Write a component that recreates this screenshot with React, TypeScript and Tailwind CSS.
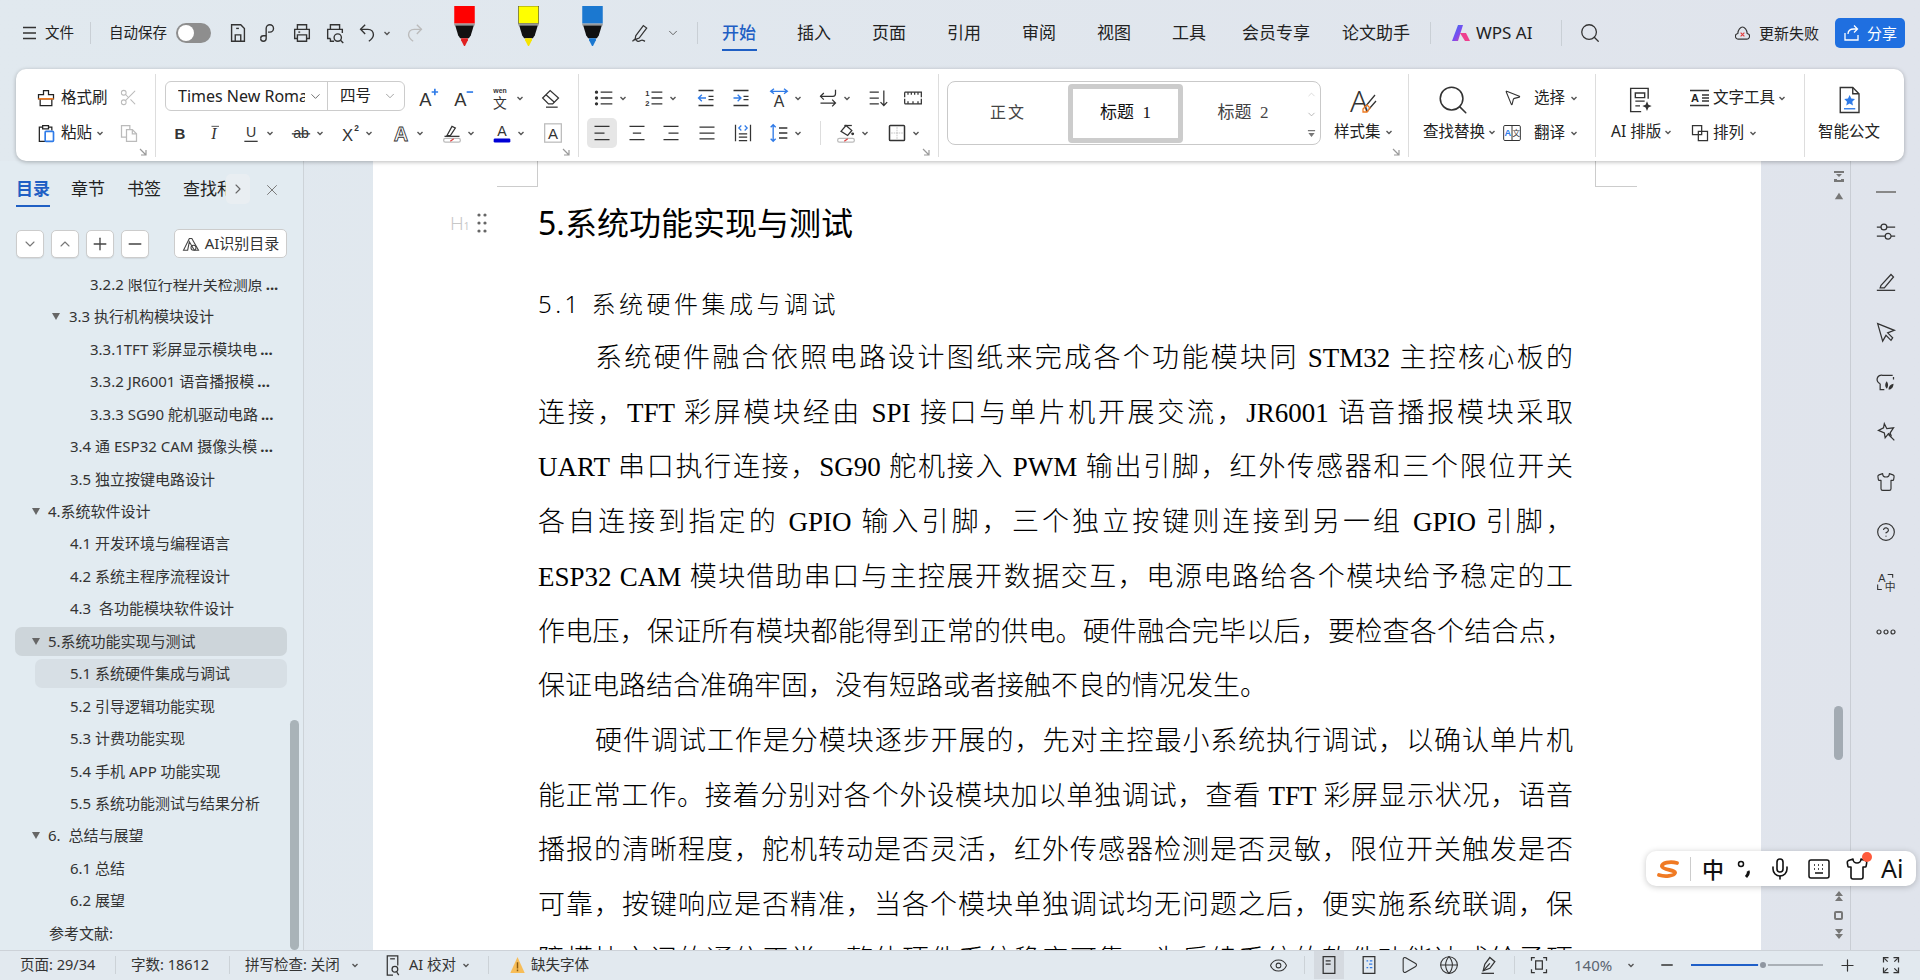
import type { ReactNode } from "react";
import { ChevronDown, ChevronUp, ChevronRight, CircleHelp, Eye, Globe, Mic, Minus, MousePointer2, Play, Plus, Scissors, Search, Shirt, X } from "lucide-react";

type IcProps = { c?: string; sw?: number; children?: ReactNode };

const Ic = ({ c = "h-[20px] w-[20px]", sw = 1.5, children }: IcProps) => (
  <svg viewBox="0 0 24 24" fill="none" stroke="currentColor" strokeWidth={sw} className={`shrink-0 overflow-visible ${c}`}>
    {children}
  </svg>
);

const T = ({ x = 12, y = 20, s = 20, w = 400, f = "Liberation Sans", it = false, fill = "currentColor", stroke = "none", children }: { x?: number; y?: number; s?: number; w?: number; f?: string; it?: boolean; fill?: string; stroke?: string; children: ReactNode }) => (
  <text x={x} y={y} textAnchor="middle" fontSize={s} fontWeight={w} fontFamily={f} fontStyle={it ? "italic" : "normal"} fill={fill} stroke={stroke} strokeWidth={stroke === "none" ? 0 : 1}>
    {children}
  </text>
);

const BLUE = "#2f7be8";

const Caret = () => (
  <svg viewBox="0 0 8 8" fill="none" stroke="#555" strokeWidth="1.4" className="h-[8px] w-[8px] shrink-0">
    <path d="M1.5 3l2.5 2.5L6.5 3" />
  </svg>
);

const Corner = () => (
  <svg viewBox="0 0 10 10" fill="none" stroke="#999" strokeWidth="1.2" className="absolute bottom-[0px] right-[7px] h-[10px] w-[10px]">
    <path d="M2 2l6 6M8 3v5H3" />
  </svg>
);

// one tool in a ribbon row, w is the slot width
const Tool = ({ w, caret, children }: { w: string; caret?: boolean; children: ReactNode }) => (
  <div className={`flex h-full items-center justify-center gap-[5px] text-[#333] ${w}`}>
    {children}
    {caret && <Caret />}
  </div>
);

const Lines = ({ rows, c }: { rows: string[]; c?: string }) => (
  <Ic c={c}>
    {rows.map((d) => (
      <path key={d} d={d} />
    ))}
  </Ic>
);

const Marker = ({ body, tip, outline }: { body: string; tip: string; outline?: boolean }) => (
  <svg viewBox="0 0 21 42" className="h-[41px] w-[21px] shrink-0 self-start">
    <rect x="0" y="0" width="21" height="18" fill={body} stroke={outline ? "#333" : "none"} strokeWidth="0.6" />
    <rect x="0" y="18" width="21" height="2" fill="#999" />
    <path d="M1 20h19l-3 10-2 3H6l-2-3z" fill="#111" />
    <path d="M7 33h7v2l-3 6h-1l-3-6z" fill={tip} />
  </svg>
);

const Pen = ({ c = "h-[20px] w-[20px]" }: { c?: string }) => (
  <Ic c={c}>
    <path d="M7 15L16 3l4 3-9 12-5 2z" />
    <path d="M3 22c2-3 4-3 5-1s3 1 5 0 3 0 5 1" />
  </Ic>
);

const TitleBar = () => (
  <div className="flex h-[69px] shrink-0 items-center pb-[3px] text-[14.5px] text-[#222]">
    <svg viewBox="0 0 15 14" fill="none" stroke="#333" strokeWidth="1.4" className="ml-[22px] h-[14px] w-[15px] shrink-0">
      <path d="M1 1.5h13M1 7h13M1 12.5h13" />
    </svg>
    <span className="ml-[8px] w-[30px]">文件</span>
    <div className="ml-[15px] h-[22px] w-px bg-[#c9cfd5]" />
    <span className="ml-[18px] w-[59px] whitespace-nowrap">自动保存</span>
    <div className="ml-[8px] flex h-[20px] w-[35px] shrink-0 items-center rounded-full bg-[#8e8e8e] pl-[2px]">
      <div className="h-[16px] w-[16px] rounded-full bg-white" />
    </div>
    <div className="ml-[16px] text-[#333]">
      <Lines c="h-[22px] w-[22px]" rows={["M5 3h10l4 4v14H5z", "M9 21v-7h6v7", "M10 7h3"]} />
    </div>
    <div className="ml-[8px] text-[#333]">
      <Lines c="h-[22px] w-[22px]" rows={["M4 18a3 3 0 1 0 6 0V7a4 4 0 1 1 4 4h-2", "M4 18a3 3 0 0 1 3-3h3"]} />
    </div>
    <div className="ml-[12px] text-[#333]">
      <Lines c="h-[22px] w-[22px]" rows={["M7 8V3h10v5", "M7 18H4V8h16v10h-3", "M7 14h10v7H7z", "M8 11h2"]} />
    </div>
    <div className="ml-[11px] text-[#333]">
      <Lines c="h-[22px] w-[22px]" rows={["M7 8V3h10v5", "M7 18H4V8h16v4", "M7 18v3h4", "M15 13a4 4 0 1 0 0 8 4 4 0 0 0 0-8z", "M18 20l3 3"]} />
    </div>
    <div className="ml-[10px] text-[#333]">
      <Lines c="h-[22px] w-[22px]" rows={["M10 3L5 8l5 5", "M5 8h8c4 0 6 3 6 6s-2 5-5 7"]} />
    </div>
    <div className="ml-[5px]">
      <Caret />
    </div>
    <div className="ml-[13px] text-[#bbb]">
      <Lines c="h-[22px] w-[22px]" rows={["M14 3l5 5-5 5", "M19 8h-8c-4 0-6 3-6 6s2 5 5 7"]} />
    </div>
    <div className="ml-[28px] flex h-full items-start pt-[6px]">
      <Marker body="#ff0000" tip="#e02020" />
    </div>
    <div className="ml-[43px] flex h-full items-start pt-[6px]">
      <Marker body="#ffff00" tip="#f5e400" outline />
    </div>
    <div className="ml-[43px] flex h-full items-start pt-[6px]">
      <Marker body="#1b78d0" tip="#1b78d0" />
    </div>
    <div className="ml-[27px] text-[#333]">
      <Pen />
    </div>
    <ChevronDown strokeWidth={1.5} className="ml-[16px] h-[14px] w-[14px] shrink-0 text-[#555]" />
    <div className="ml-[17px] h-[22px] w-px bg-[#c9cfd5]" />
    <div className="ml-[24px] flex gap-[41px] text-[17px]">
      <span className="relative w-[34px] whitespace-nowrap font-medium text-[#1f5fc4]">
        开始
        <span className="absolute bottom-[-5px] left-0 h-[2px] w-[35px] bg-[#1f5fc4]" />
      </span>
      <span className="w-[34px] whitespace-nowrap">插入</span>
      <span className="w-[34px] whitespace-nowrap">页面</span>
      <span className="w-[34px] whitespace-nowrap">引用</span>
      <span className="w-[34px] whitespace-nowrap">审阅</span>
      <span className="w-[34px] whitespace-nowrap">视图</span>
      <span className="w-[34px] whitespace-nowrap">工具</span>
    </div>
    <span className="ml-[36px] w-[68px] whitespace-nowrap text-[17px]">会员专享</span>
    <span className="ml-[32px] w-[68px] whitespace-nowrap text-[17px]">论文助手</span>
    <div className="ml-[20px] h-[22px] w-px bg-[#c9cfd5]" />
    <svg viewBox="0 0 20 20" className="ml-[20px] h-[20px] w-[20px] shrink-0">
      <defs>
        <linearGradient id="wa" x1="0" y1="0" x2="1" y2="1">
          <stop offset="0" stopColor="#2f7bf0" />
          <stop offset="0.55" stopColor="#7a4cf0" />
          <stop offset="1" stopColor="#f0409a" />
        </linearGradient>
      </defs>
      <path d="M1 18L7 2h5L7 18z" fill="url(#wa)" />
      <path d="M9 10l6 0 4 8h-5z" fill="#ee3f8e" />
    </svg>
    <span className="ml-[5px] w-[60px] whitespace-nowrap text-[17px]">WPS AI</span>
    <div className="ml-[25px] h-[26px] w-px bg-[#c9cfd5]" />
    <Search strokeWidth={1.4} className="ml-[17px] h-[22px] w-[22px] shrink-0 text-[#333]" />
    <svg viewBox="0 0 16 18" fill="none" stroke="#333" strokeWidth="1.2" className="ml-auto h-[17px] w-[15px] shrink-0">
      <path d="M4 15a3 3 0 0 1-1-6c0-4 3-7 5-7s5 3 5 7a3 3 0 0 1-1 6z" />
      <path d="M6 8l4 4M10 8l-4 4" stroke="#e23b3b" />
    </svg>
    <span className="ml-[9px] w-[62px] whitespace-nowrap text-[15px]">更新失败</span>
    <div className="ml-[14px] mr-[15px] flex h-[30px] w-[70px] items-center justify-center gap-[6px] rounded-[5px] bg-[#1f6fe0] text-[15px] text-white">
      <svg viewBox="0 0 18 18" fill="none" stroke="white" strokeWidth="1.3" className="h-[18px] w-[18px] shrink-0">
        <path d="M2 9v7h13v-5" />
        <path d="M5 10c0-3 2-5 6-5h3M11 1.5L14.5 5 11 8.5" />
      </svg>
      分享
    </div>
  </div>
);

const Ribbon = () => (
  <div className="z-10 mx-[16px] flex h-[92px] shrink-0 rounded-[10px] bg-white pt-[5px] text-[15.5px] text-[#222] shadow-[0_1px_4px_rgba(0,0,0,0.28)]">
    <div className="relative h-[83px] w-[140px] shrink-0 border-r border-[#ddd] pt-[6px]">
      <div className="flex h-[35px] items-center pl-[20px]">
        <Ic c="h-[20px] w-[20px]" sw={1.5}>
          <path d="M9 8V3h6v5h6v5H3V8z" />
          <path d="M5 13v8h14v-8" />
          <path d="M3 13h18" stroke="#ef7b22" strokeWidth="2" />
        </Ic>
        <span className="ml-[5px] w-[58px] whitespace-nowrap">格式刷</span>
        <Scissors strokeWidth={1.3} className="h-[19px] w-[19px] shrink-0 text-[#bbb]" />
      </div>
      <div className="flex h-[35px] items-center pl-[20px]">
        <Ic c="h-[20px] w-[20px]">
          <path d="M8 5H4v17h8" />
          <path d="M8 3h7v4H8z" />
          <path d="M15 5h4v4" />
          <rect x="11" y="10" width="10" height="12" rx="1" stroke={BLUE} strokeWidth="2" />
        </Ic>
        <span className="ml-[5px] w-[31px] whitespace-nowrap">粘贴</span>
        <div className="ml-[4px] w-[23px]">
          <Caret />
        </div>
        <div className="text-[#bbb]">
          <Lines rows={["M9 17H3V3h10v5", "M9 8h7l5 5v9H9z", "M16 8v5h5"]} />
        </div>
      </div>
      <Corner />
    </div>

    <div className="relative h-[83px] w-[423px] shrink-0 border-r border-[#ddd] pl-[9px] pt-[6px]">
      <div className="flex h-[35px] items-center">
        <div className="mb-[3px] flex h-[30px] w-[240px] shrink-0 items-center rounded-[6px] border border-[#ccc]">
          <span className="ml-[12px] w-[127px] overflow-hidden whitespace-nowrap text-[16px]">Times New Roman</span>
          <ChevronDown strokeWidth={1.5} className="ml-[3px] h-[15px] w-[15px] shrink-0 text-[#666]" />
          <div className="ml-[4px] h-full w-px bg-[#ccc]" />
          <span className="ml-[12px] w-[38px] whitespace-nowrap">四号</span>
          <ChevronDown strokeWidth={1.3} className="ml-[5px] h-[14px] w-[14px] shrink-0 text-[#888]" />
        </div>
        <div className="ml-[6px] flex h-full">
          <Tool w="w-[34px]">
            <Ic c="h-[22px] w-[22px]">
              <T x={9} y={21} s={20}>A</T>
              <path d="M16 5.5h7M19.5 2v7" stroke={BLUE} strokeWidth="1.8" />
            </Ic>
          </Tool>
          <Tool w="w-[36px]">
            <Ic c="h-[22px] w-[22px]">
              <T x={9} y={21} s={20}>A</T>
              <path d="M16 5.5h7" stroke={BLUE} strokeWidth="1.8" />
            </Ic>
          </Tool>
          <Tool w="w-[51px]" caret>
            <Ic c="h-[22px] w-[22px]">
              <T y={6} s={7.5} w={700}>wen</T>
              <T y={23} s={15} f="Noto Sans CJK SC">文</T>
            </Ic>
          </Tool>
          <Tool w="w-[38px]">
            <Lines rows={["M2 12L11 3l10 9-7 7H9z", "M6 8l10 9", "M6 23h14"]} />
          </Tool>
        </div>
      </div>
      <div className="flex h-[35px] items-center">
        <Tool w="w-[30px]">
          <Ic>
            <T y={19} s={18} w={700}>B</T>
          </Ic>
        </Tool>
        <Tool w="w-[38px]">
          <Ic>
            <T y={19} s={19} it f="Liberation Serif">I</T>
            <path d="M9 4h9" strokeWidth="1" />
          </Ic>
        </Tool>
        <Tool w="w-[49px]" caret>
          <Ic>
            <T y={17} s={17}>U</T>
            <path d="M4 22h16" />
          </Ic>
        </Tool>
        <Tool w="w-[51px]" caret>
          <Ic>
            <T y={18} s={17}>ab</T>
            <path d="M1 13h22" />
          </Ic>
        </Tool>
        <Tool w="w-[47px]" caret>
          <Ic>
            <T x={9} y={21} s={20}>X</T>
            <T x={20} y={10} s={10} w={700}>2</T>
          </Ic>
        </Tool>
        <Tool w="w-[55px]" caret>
          <Ic>
            <T y={21} s={24} fill="white" stroke="#333" w={700}>A</T>
          </Ic>
        </Tool>
        <Tool w="w-[46px]" caret>
          <Ic>
            <path d="M6 15L12 4l4 2-6 9z" />
            <path d="M3 16h18" />
            <rect x="2" y="18.5" width="20" height="4.5" rx="2" stroke="#bbb" />
            <path d="M10 22l4-3" stroke="#e04040" />
          </Ic>
        </Tool>
        <Tool w="w-[54px]" caret>
          <Ic>
            <T y={16} s={17}>A</T>
            <rect x="2" y="18.5" width="20" height="5" rx="1.5" fill="#0000d6" stroke="none" />
          </Ic>
        </Tool>
        <Tool w="w-[36px]">
          <Ic>
            <rect x="2" y="1" width="20" height="22" stroke="#bbb" />
            <T y={19} s={18}>A</T>
          </Ic>
        </Tool>
      </div>
      <Corner />
    </div>

    <div className="relative h-[83px] w-[360px] shrink-0 border-r border-[#ddd] pl-[8px] pt-[6px]">
      <div className="flex h-[35px] items-center">
        <Tool w="w-[46px]" caret>
          <Ic sw={1.6}>
            <path d="M8 5h14M8 12h14M8 19h14" />
            <circle cx="3" cy="5" r="1.2" fill="currentColor" />
            <circle cx="3" cy="12" r="1.2" fill="currentColor" />
            <circle cx="3" cy="19" r="1.2" fill="currentColor" />
          </Ic>
        </Tool>
        <Tool w="w-[54px]" caret>
          <Ic sw={1.6}>
            <path d="M9 5h13M9 12h13M9 19h13" />
            <T x={4} y={9} s={9} w={700}>1</T>
            <T x={4} y={22} s={9} w={700}>2</T>
          </Ic>
        </Tool>
        <Tool w="w-[38px]">
          <Ic sw={1.6}>
            <path d="M3 3h18M3 21h18M15 10h6M15 14h6" />
            <path d="M12 12H3M7 8l-4 4 4 4" stroke={BLUE} />
          </Ic>
        </Tool>
        <Tool w="w-[32px]">
          <Ic sw={1.6}>
            <path d="M3 3h18M3 21h18M15 10h6M15 14h6" />
            <path d="M3 12h9M8 8l4 4-4 4" stroke={BLUE} />
          </Ic>
        </Tool>
        <Tool w="w-[56px]" caret>
          <Ic sw={1.6}>
            <T y={23} s={19}>A</T>
            <path d="M2 4h20M6 1L2 4l4 3M18 1l4 3-4 3" stroke={BLUE} />
          </Ic>
        </Tool>
        <Tool w="w-[42px]" caret>
          <Lines rows={["M21 2v5a3 3 0 0 1-3 3H3", "M7 6l-4 4 4 4", "M3 18h18M17 14l4 4-4 4"]} />
        </Tool>
        <Tool w="w-[46px]">
          <Lines rows={["M2 5h11M2 12h11M2 19h11", "M19 3v18M15 17l4 4 4-4"]} />
        </Tool>
        <Tool w="w-[24px]">
          <Lines rows={["M2 5h20v6M2 5v6M2 19h20v-6M2 19v-6", "M6 5v3M10 5v3M14 5v3M18 5v3M6 19v-3M12 19v-3M18 19v-3"]} />
        </Tool>
      </div>
      <div className="flex h-[35px] items-center">
        <div className="flex h-[30px] w-[30px] items-center justify-center rounded-[5px] bg-[#e6e6e6] text-[#333]">
          <Lines rows={["M3 4h18M3 12h12M3 20h18"]} />
        </div>
        <Tool w="w-[40px]">
          <Lines rows={["M3 4h18M7 12h10M3 20h18"]} />
        </Tool>
        <Tool w="w-[28px]">
          <Lines rows={["M3 4h18M9 12h12M3 20h18"]} />
        </Tool>
        <Tool w="w-[44px]">
          <Lines rows={["M3 5h18M3 12h18M3 19h18"]} />
        </Tool>
        <Tool w="w-[28px]">
          <Ic>
            <path d="M3 2v20M21 2v20M7 13h10M7 17h10M7 21h10" />
            <path d="M10 3L7 6l3 3M14 3l3 3-3 3" stroke={BLUE} />
          </Ic>
        </Tool>
        <Tool w="w-[56px]" caret>
          <Ic sw={1.6}>
            <path d="M12 6h10M12 12h10M12 18h10" />
            <path d="M5 2v20M2 5l3-3 3 3M2 19l3 3 3-3" stroke={BLUE} />
          </Ic>
        </Tool>
        <div className="ml-[7px] h-[24px] w-px bg-[#ddd]" />
        <Tool w="w-[63px]" caret>
          <Ic>
            <path d="M6 10l6-7 7 6-5 6z" />
            <path d="M10 3h9" />
            <circle cx="20" cy="13" r="1" fill="currentColor" />
            <rect x="2" y="18.5" width="20" height="4.5" rx="2" stroke="#bbb" />
            <path d="M10 22l4-3" stroke="#e04040" />
          </Ic>
        </Tool>
        <Tool w="w-[39px]" caret>
          <Ic sw={1.8}>
            <rect x="3" y="3" width="18" height="18" rx="1" />
            <path d="M12 5v14M5 12h14" stroke="#bbb" strokeWidth="1" strokeDasharray="2 1" />
          </Ic>
        </Tool>
      </div>
      <Corner />
    </div>

    <div className="relative flex h-[83px] w-[470px] shrink-0 border-r border-[#ddd] pl-[8px] pt-[7px]">
      <div className="flex h-[64px] w-[374px] shrink-0 items-center rounded-[8px] border border-[#c9c9c9] font-['Liberation_Serif','Noto_Sans_CJK_SC',serif] text-[17px]">
        <div className="w-[120px] text-center text-[16px] tracking-[2px] text-[#444]">正文</div>
        <div className="flex h-[59px] w-[115px] items-center justify-center whitespace-pre rounded-[4px] border-[5px] border-[#cccccc] text-[#111]">标题  1</div>
        <div className="w-[120px] whitespace-pre text-center text-[#444]">标题  2</div>
        <div className="flex w-[16px] flex-col items-center gap-[9px] text-[#999]">
          <ChevronUp strokeWidth={1.5} className="h-[11px] w-[11px] text-[#ccc]" />
          <ChevronDown strokeWidth={1.5} className="h-[11px] w-[11px]" />
          <svg viewBox="0 0 10 10" className="h-[9px] w-[9px]">
            <path d="M1 1h8v1.5H1zM1.5 4.5h7L5 9z" fill="#777" />
          </svg>
        </div>
      </div>
      <div className="ml-[13px] flex h-[70px] flex-col items-center">
        <div className="flex h-[39px] w-[46px] items-center justify-center text-[#333]">
          <svg viewBox="0 0 30 34" fill="none" stroke="currentColor" strokeWidth="1.3" className="h-[34px] w-[30px] overflow-visible">
            <T x={11} y={28} s={30} w={300} f="Noto Sans">A</T>
            <path d="M17 23L27 11M21 25l7-8" />
            <path d="M15 25l4-4 3 3-3 4h-4z" stroke="#ef7b22" />
          </svg>
        </div>
        <div className="flex h-[24px] items-center gap-[4px] whitespace-nowrap">
          样式集
          <Caret />
        </div>
      </div>
      <Corner />
    </div>

    <div className="flex h-[83px] w-[187px] shrink-0 border-r border-[#ddd]">
      <div className="flex w-[91px] shrink-0 flex-col pl-[14px] pt-[6px]">
        <div className="flex h-[39px] w-[60px] items-center justify-center text-[#333]">
          <Search strokeWidth={1.1} className="h-[34px] w-[34px]" />
        </div>
        <div className="mt-[1px] flex h-[24px] items-center gap-[3px] whitespace-nowrap">
          查找替换
          <Caret />
        </div>
      </div>
      <div className="flex flex-col pt-[6px]">
        <div className="flex h-[35px] items-center">
          <div className="flex w-[24px] justify-center text-[#333]">
            <MousePointer2 strokeWidth={1.4} className="h-[19px] w-[19px]" />
          </div>
          <span className="ml-[10px] w-[31px] whitespace-nowrap">选择</span>
          <div className="ml-[5px]">
            <Caret />
          </div>
        </div>
        <div className="flex h-[35px] items-center">
          <div className="flex w-[24px] justify-center text-[#333]">
            <Ic c="h-[20px] w-[20px]" sw={1.2}>
              <rect x="2" y="3" width="20" height="18" rx="1.5" />
              <path d="M12 3v18" />
              <T x={7} y={16} s={11} w={700} fill={BLUE}>A</T>
              <T x={17} y={16} s={9} f="Noto Sans CJK SC">文</T>
            </Ic>
          </div>
          <span className="ml-[10px] w-[31px] whitespace-nowrap">翻译</span>
          <div className="ml-[5px]">
            <Caret />
          </div>
        </div>
      </div>
    </div>

    <div className="flex h-[83px] w-[209px] shrink-0 border-r border-[#ddd]">
      <div className="flex w-[84px] shrink-0 flex-col pl-[15px] pt-[6px]">
        <div className="flex h-[39px] w-[58px] items-center justify-center text-[#333]">
          <Ic c="h-[28px] w-[28px]" sw={1.2}>
            <path d="M19 11V2H4v20h9" />
            <path d="M8 6h8v4H8zM8 13h8M8 17h4" />
            <path d="M18 13l1.2 3 2.8 1.2-2.8 1.2-1.2 3-1.2-3-2.8-1.2 2.8-1.2z" fill="currentColor" stroke="none" />
          </Ic>
        </div>
        <div className="mt-[1px] flex h-[24px] items-center gap-[3px] whitespace-nowrap">
          AI 排版
          <Caret />
        </div>
      </div>
      <div className="ml-[9px] flex flex-col pt-[6px]">
        <div className="flex h-[35px] items-center">
          <svg viewBox="0 0 21 18" fill="none" stroke="#333" strokeWidth="1.3" className="h-[18px] w-[21px] shrink-0">
            <path d="M1 1.5h19M1 16.5h19M13 6h7M13 9h7M13 12h7" />
            <T x={6} y={13} s={11} w={700}>A</T>
          </svg>
          <span className="ml-[3px] w-[62px] whitespace-nowrap">文字工具</span>
          <div className="ml-[3px]">
            <Caret />
          </div>
        </div>
        <div className="flex h-[35px] items-center">
          <div className="flex w-[21px] justify-center text-[#333]">
            <Lines rows={["M3 3h11v11H3z", "M10 10h11v11H10z"]} />
          </div>
          <span className="ml-[3px] w-[31px] whitespace-nowrap">排列</span>
          <div className="ml-[5px]">
            <Caret />
          </div>
        </div>
      </div>
    </div>

    <div className="flex h-[83px] flex-col items-start pl-[13px] pt-[6px]">
      <div className="flex h-[39px] w-[62px] items-center justify-center text-[#333]">
        <Ic c="h-[30px] w-[30px]" sw={1.1}>
          <path d="M5 2h10l5 5v15H5z" />
          <path d="M15 2v5h5" />
          <path d="M12.5 8l1.3 2.8 3 .4-2.2 2.1.6 3-2.7-1.5-2.7 1.5.6-3-2.2-2.1 3-.4z" fill={BLUE} stroke="none" />
          <path d="M8 19h9" stroke={BLUE} />
        </Ic>
      </div>
      <div className="mt-[1px] flex h-[24px] items-center whitespace-nowrap">智能公文</div>
    </div>
  </div>
);

const tree: { t: string; lv: number; tri?: boolean; more?: boolean; on?: number }[] = [
  { t: "3.2.2 限位行程开关检测原", lv: 3, more: true },
  { t: "3.3 执行机构模块设计", lv: 2, tri: true },
  { t: "3.3.1TFT 彩屏显示模块电", lv: 3, more: true },
  { t: "3.3.2 JR6001 语音播报模", lv: 3, more: true },
  { t: "3.3.3 SG90 舵机驱动电路", lv: 3, more: true },
  { t: "3.4 通 ESP32 CAM 摄像头模", lv: 2, more: true },
  { t: "3.5 独立按键电路设计", lv: 2 },
  { t: "4.系统软件设计", lv: 1, tri: true },
  { t: "4.1 开发环境与编程语言", lv: 2 },
  { t: "4.2 系统主程序流程设计", lv: 2 },
  { t: "4.3  各功能模块软件设计", lv: 2 },
  { t: "5.系统功能实现与测试", lv: 1, tri: true, on: 1 },
  { t: "5.1 系统硬件集成与调试", lv: 2, on: 2 },
  { t: "5.2 引导逻辑功能实现", lv: 2 },
  { t: "5.3 计费功能实现", lv: 2 },
  { t: "5.4 手机 APP 功能实现", lv: 2 },
  { t: "5.5 系统功能测试与结果分析", lv: 2 },
  { t: "6.  总结与展望", lv: 1, tri: true },
  { t: "6.1 总结", lv: 2 },
  { t: "6.2 展望", lv: 2 },
  { t: "参考文献:", lv: 1 },
];

const Tri = () => <span className="h-0 w-0 shrink-0 border-x-[4.5px] border-t-[7px] border-x-transparent border-t-[#666]" />;

const TreeRow = ({ t, lv, tri, more, on }: (typeof tree)[number]) => {
  const box = on === 1 ? "bg-[#cdd5da] rounded-[7px]" : on === 2 ? "ml-[20px] bg-[#d7dfe5] rounded-[7px]" : "";
  const pad = on === 2 ? "pl-[35px]" : lv === 3 ? "pl-[75px]" : lv === 2 ? (tri ? "pl-[37px]" : "pl-[55px]") : tri ? "pl-[17px]" : "pl-[34px]";
  return (
    <div className="flex h-[32.45px] items-center">
      <div className={`flex h-[29px] flex-1 items-center whitespace-pre text-[15px] text-[#333] ${box} ${pad}`}>
        {tri && <Tri />}
        <span className={tri ? (lv === 1 ? "ml-[8px]" : "ml-[9px]") : ""}>{t}</span>
        {more && <span className="ml-[3px] font-bold">...</span>}
      </div>
    </div>
  );
};

const SmallBtn = ({ children }: { children: ReactNode }) => (
  <div className="flex h-[28px] w-[28px] items-center justify-center rounded-[5px] border border-[#ccc] bg-white text-[#444] shadow-[0_1px_1px_rgba(0,0,0,0.08)]">{children}</div>
);

const Sidebar = () => (
  <div className="relative flex w-[304px] shrink-0 flex-col overflow-hidden border-r border-[#cdd3d8] bg-[#e2ebf1]">
    <div className="flex h-[46px] items-end pl-[16px] text-[17px] text-[#222]">
      <span className="relative w-[34px] whitespace-nowrap pb-[6px] font-bold text-[#1f5fc4]">
        目录
        <span className="absolute bottom-0 left-0 h-[2px] w-[34px] bg-[#1f5fc4]" />
      </span>
      <span className="ml-[21px] w-[34px] whitespace-nowrap pb-[6px]">章节</span>
      <span className="ml-[22px] w-[34px] whitespace-nowrap pb-[6px]">书签</span>
      <span className="ml-[22px] w-[43px] overflow-hidden whitespace-nowrap pb-[6px]">查找和替换</span>
      <div className="mb-[3px] flex h-[30px] w-[24px] items-center justify-center rounded-[5px] bg-[#e9eef2] text-[#666]">
        <ChevronRight strokeWidth={1.6} className="h-[16px] w-[16px]" />
      </div>
      <X strokeWidth={1.3} className="mb-[8px] ml-[13px] h-[18px] w-[18px] text-[#777]" />
    </div>
    <div className="mt-[22px] flex h-[29px] items-center pl-[16px]">
      <div className="flex gap-[7px]">
        <SmallBtn>
          <ChevronDown strokeWidth={1.6} className="h-[16px] w-[16px] text-[#777]" />
        </SmallBtn>
        <SmallBtn>
          <ChevronUp strokeWidth={1.6} className="h-[16px] w-[16px] text-[#777]" />
        </SmallBtn>
        <SmallBtn>
          <Plus strokeWidth={1.6} className="h-[20px] w-[20px]" />
        </SmallBtn>
        <SmallBtn>
          <Minus strokeWidth={1.6} className="h-[20px] w-[20px]" />
        </SmallBtn>
      </div>
      <div className="ml-[25px] flex h-[29px] w-[113px] items-center justify-center gap-[5px] whitespace-nowrap rounded-[5px] border border-[#ccc] bg-white text-[15px] text-[#333]">
        <svg viewBox="0 0 20 18" fill="none" stroke="#444" strokeWidth="1.3" className="h-[15px] w-[18px] shrink-0">
          <path d="M1 17L8 3l3 0 8 14h-5L8 7l-2 10z" />
          <circle cx="13" cy="14" r="3" />
        </svg>
        AI识别目录
      </div>
    </div>
    <div className="relative mt-[21px] flex-1 overflow-hidden">
      <div className="ml-[15px] mt-[-11px] w-[272px]">
        {tree.map((r) => (
          <TreeRow key={r.t} {...r} />
        ))}
      </div>
      <div className="absolute bottom-0 right-[4px] h-[230px] w-[9px] rounded-full bg-[#a9b3b8]" />
    </div>
  </div>
);

const BODY = "text-justify [text-align-last:justify]";

const lines: { t: string; first?: boolean; end?: boolean }[] = [
  { t: "系统硬件融合依照电路设计图纸来完成各个功能模块同 STM32 主控核心板的", first: true },
  { t: "连接，TFT 彩屏模块经由 SPI 接口与单片机开展交流，JR6001 语音播报模块采取" },
  { t: "UART 串口执行连接，SG90 舵机接入 PWM 输出引脚，红外传感器和三个限位开关" },
  { t: "各自连接到指定的 GPIO 输入引脚，三个独立按键则连接到另一组 GPIO 引脚，" },
  { t: "ESP32 CAM 模块借助串口与主控展开数据交互，电源电路给各个模块给予稳定的工" },
  { t: "作电压，保证所有模块都能得到正常的供电。硬件融合完毕以后，要检查各个结合点，" },
  { t: "保证电路结合准确牢固，没有短路或者接触不良的情况发生。", end: true },
  { t: "硬件调试工作是分模块逐步开展的，先对主控最小系统执行调试，以确认单片机", first: true },
  { t: "能正常工作。接着分别对各个外设模块加以单独调试，查看 TFT 彩屏显示状况，语音" },
  { t: "播报的清晰程度，舵机转动是否灵活，红外传感器检测是否灵敏，限位开关触发是否" },
  { t: "可靠，按键响应是否精准，当各个模块单独调试均无问题之后，便实施系统联调，保" },
  { t: "障模块之间的通信正常，整体硬件系统稳定可靠，为后续系统的软件功能达成给予硬" },
];

const Page = () => (
  <div className="flex w-[1388px] shrink-0 flex-col overflow-hidden bg-white text-black">
    <div className="flex h-[26px] shrink-0 justify-between">
      <div className="ml-[124px] h-[26px] w-[41px] border-b border-r border-[#ccc]" />
      <div className="mr-[124px] h-[26px] w-[42px] border-b border-l border-[#ccc]" />
    </div>
    <div className="mt-[14px] flex h-[44px] shrink-0 items-center pl-[77px]">
      <div className="flex w-[88px] items-center text-[#c8c8c8]">
        <span className="text-[19px] font-light">H</span>
        <span className="mt-[6px] text-[10px]">1</span>
        <svg viewBox="0 0 10 22" className="ml-[7px] h-[22px] w-[10px] fill-[#666]">
          <circle cx="2" cy="3" r="1.6" />
          <circle cx="8" cy="3" r="1.6" />
          <circle cx="2" cy="11" r="1.6" />
          <circle cx="8" cy="11" r="1.6" />
          <circle cx="2" cy="19" r="1.6" />
          <circle cx="8" cy="19" r="1.6" />
        </svg>
      </div>
      <h1 className="whitespace-nowrap text-[32px] font-normal leading-[44px]">5.系统功能实现与测试</h1>
    </div>
    <h2 className="ml-[165px] mt-[41px] h-[36px] shrink-0 whitespace-nowrap text-[24px] font-light leading-[36px] tracking-[3.5px]">5.1 系统硬件集成与调试</h2>
    <div className="ml-[165px] mt-[9px] w-[1035px] font-['Liberation_Serif','Noto_Sans_CJK_SC',serif] text-[27px] font-light leading-[54.7px]">
      {lines.map((l) => (
        <div key={l.t} className={`${l.first ? "pl-[57px]" : ""} ${l.end ? "" : BODY}`}>
          {l.t}
        </div>
      ))}
    </div>
  </div>
);

const RightBar = () => (
  <div className="flex w-[70px] shrink-0 flex-col items-center border-l border-[#c9cdd4] pt-[16px] text-[#333]">
    <div className="flex h-[30px] items-center justify-center">
      <div className="h-[1.5px] w-[20px] bg-[#888]" />
    </div>
    <div className="flex h-[50px] items-center justify-center">
      <Lines rows={["M1 6h5M13 6h10M1 17h10M18 17h5", "M6 6a3.5 3.5 0 1 0 7 0 3.5 3.5 0 0 0-7 0z", "M11 17a3.5 3.5 0 1 0 7 0 3.5 3.5 0 0 0-7 0z"]} />
    </div>
    <div className="flex h-[50px] items-center justify-center">
      <Lines rows={["M6 16L18 3l3 3-11 13H5z", "M1 22h22"]} />
    </div>
    <div className="flex h-[50px] items-center justify-center">
      <Lines rows={["M2 2l20 8-8 3 6 6-2 3-6-6-4 7z"]} />
    </div>
    <div className="flex h-[50px] items-center justify-center">
      <Ic>
        <path d="M5 14a4 4 0 1 1 3-10h12M5 14v7h5" />
        <path d="M13 20c-3-3-2-7 0-9 2 3 2 6 0 9zM15 21c0-4 2-6 6-7 0 4-2 7-6 7z" fill="currentColor" stroke="none" />
        <path d="M21 6v3" />
      </Ic>
    </div>
    <div className="flex h-[50px] items-center justify-center">
      <Lines rows={["M10 2l3 6 8-1-4 6 1 3-3-2-4 5-1-6-7-3 6-3z", "M15 15l7 7"]} />
    </div>
    <div className="flex h-[50px] items-center justify-center">
      <Shirt strokeWidth={1.4} className="h-[20px] w-[20px]" />
    </div>
    <div className="flex h-[50px] items-center justify-center">
      <CircleHelp strokeWidth={1.4} className="h-[20px] w-[20px]" />
    </div>
    <div className="flex h-[50px] items-center justify-center">
      <Ic sw={1.3}>
        <T x={7} y={12} s={13}>A</T>
        <path d="M14 3h6v4M2 15v6h5" />
        <T x={17} y={23} s={13} f="Noto Sans CJK SC">中</T>
      </Ic>
    </div>
    <div className="flex h-[50px] items-center justify-center">
      <svg viewBox="0 0 20 6" fill="none" stroke="#333" strokeWidth="1.2" className="h-[6px] w-[20px]">
        <circle cx="3" cy="3" r="2" />
        <circle cx="10" cy="3" r="2" />
        <circle cx="17" cy="3" r="2" />
      </svg>
    </div>
  </div>
);

const DocScroll = () => (
  <div className="flex w-[89px] shrink-0 flex-col pl-[72px] pb-[10px] pt-[10px] text-[#777]">
    <svg viewBox="0 0 12 12" className="h-[12px] w-[12px] fill-current">
      <path d="M1 0h10v2H1zM3 3h6L6 6zM1 8h3v1h4V8h3v3H1z" />
    </svg>
    <svg viewBox="0 0 12 12" className="mt-[8px] h-[10px] w-[12px] fill-current">
      <path d="M6 2l5 8H1z" />
    </svg>
    <div className="ml-[1px] mt-[505px] h-[54px] w-[9px] rounded-full bg-[#a3abb3]" />
    <div className="mt-auto flex flex-col gap-[8px]">
      <svg viewBox="0 0 12 12" className="h-[12px] w-[12px] fill-current">
        <path d="M6 0l4 5H2zM6 5l4 5H2z" />
      </svg>
      <div className="ml-[1px] h-[9px] w-[9px] rounded-[2px] border-2 border-[#777]" />
      <svg viewBox="0 0 12 12" className="h-[12px] w-[12px] fill-current">
        <path d="M2 1h8L6 6zM2 6h8l-4 5z" />
      </svg>
    </div>
  </div>
);

const StatusBar = () => (
  <div className="flex h-[30px] shrink-0 items-center border-t border-[#cdd2d8] bg-[#e2e9ef] pb-[1px] text-[14.5px] text-[#333]">
    <span className="ml-[20px] w-[80px] whitespace-nowrap">页面: 29/34</span>
    <div className="ml-[15px] h-[18px] w-px bg-[#ccd2d7]" />
    <span className="ml-[15px] w-[83px] whitespace-nowrap">字数: 18612</span>
    <div className="ml-[15px] h-[18px] w-px bg-[#ccd2d7]" />
    <span className="ml-[15px] w-[97px] whitespace-nowrap">拼写检查: 关闭</span>
    <div className="ml-[9px]">
      <Caret />
    </div>
    <svg viewBox="0 0 16 22" fill="none" stroke="#333" strokeWidth="1.3" className="ml-[26px] h-[21px] w-[16px] shrink-0">
      <path d="M8 21H2V1h11v10" />
      <path d="M5 4h5" />
      <circle cx="10" cy="15" r="3" />
      <path d="M12 18l2 3" />
    </svg>
    <span className="ml-[8px] w-[48px] whitespace-nowrap">AI 校对</span>
    <div className="ml-[5px]">
      <Caret />
    </div>
    <div className="ml-[18px] h-[18px] w-px bg-[#ccd2d7]" />
    <svg viewBox="0 0 18 20" className="ml-[20px] h-[18px] w-[17px] shrink-0">
      <path d="M9 1l8 18H1z" fill="#f7bd58" />
      <path d="M8.2 7h1.6v7H8.2zM8.2 15h1.6v2H8.2z" fill="#8a5a10" />
    </svg>
    <span className="ml-[5px] w-[60px] whitespace-nowrap">缺失字体</span>

    <div className="ml-auto flex w-[30px] justify-center">
      <Eye strokeWidth={1.3} className="h-[19px] w-[19px]" />
    </div>
    <div className="ml-[11px] h-[18px] w-px bg-[#ccd2d7]" />
    <div className="ml-[9px] flex h-full w-[30px] items-center justify-center bg-[#d5dae0]">
      <Lines rows={["M5 2h14v20H5z", "M8 7h6M8 11h6"]} />
    </div>
    <div className="flex w-[50px] justify-center">
      <Ic>
        <path d="M5 2h14v20H5z" />
        <path d="M9 7h2M13 7h3M12 11h4M9 15h2M13 15h3" stroke={BLUE} />
      </Ic>
    </div>
    <div className="flex w-[30px] justify-center">
      <Play strokeWidth={1.3} className="h-[20px] w-[20px]" />
    </div>
    <div className="flex w-[50px] justify-center">
      <Globe strokeWidth={1.3} className="h-[20px] w-[20px]" />
    </div>
    <div className="flex w-[30px] justify-center">
      <Lines rows={["M5 19l2-8 6-8 6 5-6 8z", "M13 10l-8 9", "M3 22h15"]} />
    </div>
    <div className="ml-[10px] h-[18px] w-px bg-[#ccd2d7]" />
    <div className="flex w-[48px] justify-center">
      <Lines rows={["M3 7V3h4M17 3h4v4M21 17v4h-4M7 21H3v-4", "M8 7h8v10H8z"]} />
    </div>
    <span className="ml-[11px] w-[40px] whitespace-nowrap text-[15px] text-[#5b6470]">140%</span>
    <div className="ml-[13px]">
      <Caret />
    </div>
    <Minus strokeWidth={1.8} className="ml-[23px] h-[18px] w-[18px] shrink-0" />
    <div className="relative ml-[15px] h-[2.5px] w-[132px] shrink-0 bg-[#aab0b6]">
      <div className="h-full w-[71px] bg-[#1f5fc8]" />
      <div className="absolute left-[67px] top-[-4px] h-[10px] w-[10px] rounded-full border-2 border-[#e2e9ef] bg-[#8f96a0]" />
    </div>
    <Plus strokeWidth={1.5} className="ml-[15px] h-[19px] w-[19px] shrink-0" />
    <div className="ml-[24px] mr-[19px]">
      <Lines rows={["M3 9V3h6M15 3h6v6M21 15v6h-6M9 21H3v-6", "M4 4l4 4M20 4l-4 4M20 20l-4-4M4 20l4-4"]} />
    </div>
  </div>
);

const ImeBar = () => (
  <div className="absolute left-[1646px] top-[851px] z-20 flex h-[35px] w-[270px] items-center rounded-[10px] bg-white text-[#111] shadow-[0_1px_6px_rgba(0,0,0,0.22)]">
    <svg viewBox="0 0 24 18" fill="none" stroke="#f07a23" strokeWidth="3.8" strokeLinecap="round" className="ml-[9px] h-[18px] w-[26px] shrink-0">
      <path d="M21 3C14 1 5 3 6 6.5S20 10 19 13 9 17 3 15" />
    </svg>
    <div className="ml-[9px] h-[24px] w-px bg-[#ccc]" />
    <span className="ml-[11px] w-[22px] text-[22px] font-medium leading-none">中</span>
    <svg viewBox="0 0 14 20" fill="none" stroke="#111" strokeWidth="1.5" className="ml-[13px] h-[20px] w-[14px] shrink-0">
      <circle cx="4" cy="5" r="2.5" />
      <path d="M11 12c1 2 0 4-2 6" strokeWidth="3" />
    </svg>
    <Mic strokeWidth={1.6} className="ml-[17px] h-[24px] w-[24px] shrink-0" />
    <div className="ml-[15px]">
      <Ic c="h-[24px] w-[24px]" sw={1.5}>
        <rect x="2" y="3" width="20" height="18" rx="2" />
        <path d="M7 8h1M11 8h1M15 8h1M7 12h1M11 12h1M15 12h1M8 16h8" />
      </Ic>
    </div>
    <div className="relative ml-[14px]">
      <Shirt strokeWidth={1.6} className="h-[24px] w-[24px]" />
      <span className="absolute right-[-3px] top-[-5px] h-[10px] w-[10px] rounded-full bg-[#ff5a3c]" />
    </div>
    <span className="relative ml-[12px] text-[25px] leading-none">
      Ai
    </span>
  </div>
);

export default function App() {
  return (
    <div className="relative flex h-[980px] w-[1920px] flex-col overflow-hidden bg-gradient-to-r from-[#e1e9ef] to-[#e0e4ec] font-['Noto_Sans','Noto_Sans_CJK_SC',sans-serif]">
      <TitleBar />
      <Ribbon />
      <div className="flex min-h-0 flex-1">
        <Sidebar />
        <div className="w-[69px] shrink-0" />
        <Page />
        <DocScroll />
        <RightBar />
      </div>
      <StatusBar />
      <ImeBar />
    </div>
  );
}
